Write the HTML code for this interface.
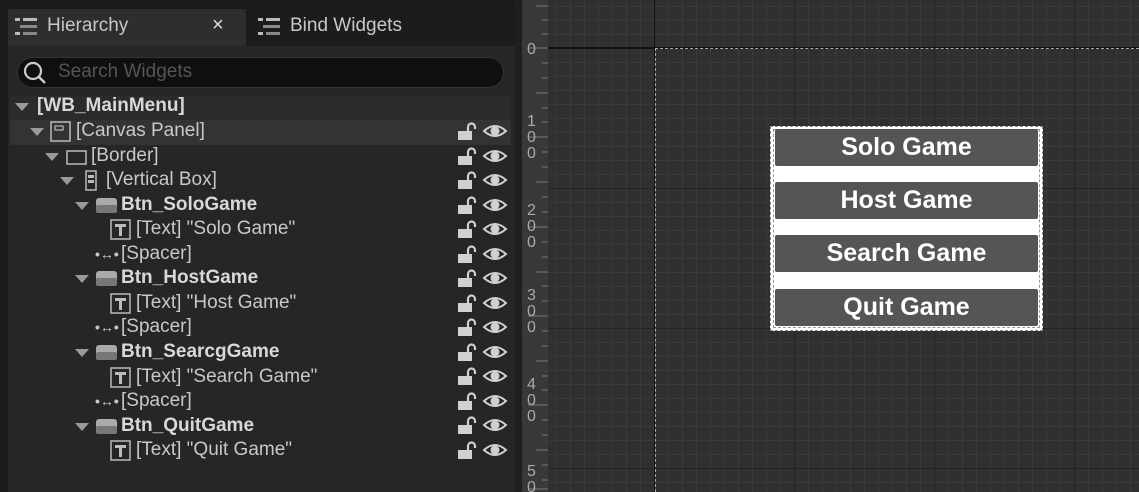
<!DOCTYPE html><html><head><style>
*{margin:0;padding:0;box-sizing:border-box}
html,body{width:1139px;height:492px;overflow:hidden}
body{background:#1a1a1a;font-family:"Liberation Sans",sans-serif;position:relative;color:#c8c8c8}
.a{position:absolute}
.row{position:absolute;left:10px;width:502px;height:24.6px;font-size:19px;line-height:24.6px;white-space:nowrap}
.tri{position:absolute;top:9px;width:0;height:0;border-left:7px solid transparent;border-right:7px solid transparent;border-top:8px solid #9a9a9a}
.t{position:absolute;top:0}
.b{font-weight:bold;color:#d8d8d8}
.ic{position:absolute;top:0}
.btn{position:absolute;left:775px;width:263px;height:37px;background:#555;border-radius:2px;color:#fff;font-weight:bold;font-size:25px;text-align:center;line-height:37px}
</style></head><body>
<div class="a" style="left:8px;top:9px;width:507px;height:483px;background:#262626"></div>
<div class="a" style="left:246px;top:9px;width:269px;height:37px;background:#1c1c1c"></div>
<div class="a" style="left:8px;top:9px;width:238px;height:37px;background:#2e2e2e;border-radius:4px 4px 0 0"></div>
<svg class="a" style="left:15px;top:17px" width="22" height="18"><rect x="0" y="1" width="5" height="3" fill="#bbb"/><rect x="8" y="1" width="14" height="3" fill="#bbb"/><rect x="5" y="8" width="17" height="3" fill="#888"/><rect x="0" y="15" width="5" height="3" fill="#bbb"/><rect x="8" y="15" width="14" height="3" fill="#888"/></svg>
<div class="a" style="left:47px;top:15px;font-size:19px;color:#c8c8c8">Hierarchy</div>
<div class="a" style="left:212px;top:14px;font-size:20px;color:#ddd">×</div>
<svg class="a" style="left:258px;top:17px" width="22" height="18"><rect x="0" y="1" width="5" height="3" fill="#bbb"/><rect x="8" y="1" width="14" height="3" fill="#bbb"/><rect x="5" y="8" width="17" height="3" fill="#888"/><rect x="0" y="15" width="5" height="3" fill="#bbb"/><rect x="8" y="15" width="14" height="3" fill="#888"/></svg>
<div class="a" style="left:290px;top:15px;font-size:19px;color:#c8c8c8">Bind Widgets</div>
<div class="a" style="left:17px;top:57px;width:487px;height:31px;background:#0f0f0f;border:1px solid #333;border-radius:16px"></div>
<svg class="a" style="left:22px;top:60px" width="26" height="26"><circle cx="11" cy="11" r="8" stroke="#ccc" stroke-width="2.2" fill="none"/><line x1="17" y1="17" x2="23" y2="23" stroke="#ccc" stroke-width="2.4"/></svg>
<div class="a" style="left:58px;top:61px;font-size:19px;color:#555">Search Widgets</div>
<div class="a" style="left:10px;top:96px;width:501px;height:24px;background:#2b2b2b"></div>
<div class="a" style="left:10px;top:120px;width:501px;height:25px;background:#333"></div>

<div class="row" style="top:94px"><div class="tri" style="left:5px"></div><span class="t b" style="left:27px">[WB_MainMenu]</span></div>
<div class="row" style="top:119px"><div class="tri" style="left:20px"></div><svg class="ic" style="left:40px;top:2px" width="21" height="21"><rect x="1" y="1" width="19" height="19" fill="none" stroke="#bbb" stroke-width="1.5"/><rect x="5" y="5" width="8" height="4" fill="none" stroke="#bbb" stroke-width="1.2"/></svg><span class="t" style="left:66px">[Canvas Panel]</span></div>
<div class="row" style="top:144px"><div class="tri" style="left:35px"></div><svg class="ic" style="left:56px;top:6px" width="21" height="16"><rect x="1" y="1" width="19" height="13" fill="none" stroke="#bbb" stroke-width="1.5"/></svg><span class="t" style="left:81px">[Border]</span></div>
<div class="row" style="top:168px"><div class="tri" style="left:50px"></div><svg class="ic" style="left:75px;top:2px" width="12" height="22"><rect x="1" y="1" width="10" height="19" fill="none" stroke="#bbb" stroke-width="1.5"/><rect x="3" y="5" width="6" height="3" fill="#bbb"/><rect x="3" y="10" width="6" height="3" fill="#bbb"/></svg><span class="t" style="left:96px">[Vertical Box]</span></div>

<div class="row" style="top:193px"><div class="tri" style="left:65px"></div><svg class="ic" style="left:86px;top:5px" width="22" height="16"><rect x="0" y="0" width="21" height="15" rx="3" fill="#aaa"/><rect x="0" y="7" width="21" height="8" rx="2" fill="#777"/></svg><span class="t b" style="left:111px">Btn_SoloGame</span></div>
<div class="row" style="top:217px"><svg class="ic" style="left:100px;top:2px" width="21" height="21"><rect x="1" y="1" width="19" height="19" fill="none" stroke="#bbb" stroke-width="1.5"/><path d="M5 5h11v3h-4v9h-3v-9h-4z" fill="#bbb"/></svg><span class="t" style="left:126px">[Text] "Solo Game"</span></div>
<div class="row" style="top:242px"><span class="t" style="left:85px;font-size:14px;font-weight:bold">•↔•</span><span class="t" style="left:111px">[Spacer]</span></div>

<div class="row" style="top:266px"><div class="tri" style="left:65px"></div><svg class="ic" style="left:86px;top:5px" width="22" height="16"><rect x="0" y="0" width="21" height="15" rx="3" fill="#aaa"/><rect x="0" y="7" width="21" height="8" rx="2" fill="#777"/></svg><span class="t b" style="left:111px">Btn_HostGame</span></div>
<div class="row" style="top:291px"><svg class="ic" style="left:100px;top:2px" width="21" height="21"><rect x="1" y="1" width="19" height="19" fill="none" stroke="#bbb" stroke-width="1.5"/><path d="M5 5h11v3h-4v9h-3v-9h-4z" fill="#bbb"/></svg><span class="t" style="left:126px">[Text] "Host Game"</span></div>
<div class="row" style="top:315px"><span class="t" style="left:85px;font-size:14px;font-weight:bold">•↔•</span><span class="t" style="left:111px">[Spacer]</span></div>

<div class="row" style="top:340px"><div class="tri" style="left:65px"></div><svg class="ic" style="left:86px;top:5px" width="22" height="16"><rect x="0" y="0" width="21" height="15" rx="3" fill="#aaa"/><rect x="0" y="7" width="21" height="8" rx="2" fill="#777"/></svg><span class="t b" style="left:111px">Btn_SearcgGame</span></div>
<div class="row" style="top:365px"><svg class="ic" style="left:100px;top:2px" width="21" height="21"><rect x="1" y="1" width="19" height="19" fill="none" stroke="#bbb" stroke-width="1.5"/><path d="M5 5h11v3h-4v9h-3v-9h-4z" fill="#bbb"/></svg><span class="t" style="left:126px">[Text] "Search Game"</span></div>
<div class="row" style="top:389px"><span class="t" style="left:85px;font-size:14px;font-weight:bold">•↔•</span><span class="t" style="left:111px">[Spacer]</span></div>

<div class="row" style="top:414px"><div class="tri" style="left:65px"></div><svg class="ic" style="left:86px;top:5px" width="22" height="16"><rect x="0" y="0" width="21" height="15" rx="3" fill="#aaa"/><rect x="0" y="7" width="21" height="8" rx="2" fill="#777"/></svg><span class="t b" style="left:111px">Btn_QuitGame</span></div>
<div class="row" style="top:438px"><svg class="ic" style="left:100px;top:2px" width="21" height="21"><rect x="1" y="1" width="19" height="19" fill="none" stroke="#bbb" stroke-width="1.5"/><path d="M5 5h11v3h-4v9h-3v-9h-4z" fill="#bbb"/></svg><span class="t" style="left:126px">[Text] "Quit Game"</span></div>

<svg class="a" style="left:455px;top:120px" width="55" height="345">
<defs><g id="le"><path d="M3 12h14v9h-14z" fill="#d0d0d0"/><path d="M13 12v-4a3.5 3.5 0 0 1 7 0v2" stroke="#d0d0d0" stroke-width="2.2" fill="none"/><path d="M29 12q11-10 22 0q-11 10-22 0z" fill="none" stroke="#d0d0d0" stroke-width="2"/><circle cx="40" cy="12" r="4.5" fill="#d0d0d0"/></g></defs>
<use href="#le" y="-1"/><use href="#le" y="24"/><use href="#le" y="48"/><use href="#le" y="73"/><use href="#le" y="97"/><use href="#le" y="122"/><use href="#le" y="146"/><use href="#le" y="171"/><use href="#le" y="195"/><use href="#le" y="220"/><use href="#le" y="244"/><use href="#le" y="269"/><use href="#le" y="293"/><use href="#le" y="318"/>
</svg>

<div class="a" style="left:515px;top:0;width:8px;height:492px;background:#1f1f1f"></div>
<div class="a" style="left:522px;top:0;width:26px;height:492px;background:#393939"></div>
<div class="a" style="left:548px;top:0;width:591px;height:492px;background-color:#303030;
background-image:linear-gradient(90deg,#242424 1px,transparent 1px),linear-gradient(#242424 1px,transparent 1px),linear-gradient(90deg,#3a3a3a 1px,transparent 1px),linear-gradient(#3a3a3a 1px,transparent 1px);
background-size:140px 140px,140px 140px,14px 14px,14px 14px;background-position:106px 48px,106px 48px,106px 48px,106px 48px"></div>
<div class="a" style="left:548px;top:47px;width:591px;height:2px;background:#111"></div>
<div class="a" style="left:654px;top:0;width:1px;height:492px;background:#111"></div>
<div class="a" style="left:655px;top:48px;width:484px;height:444px;border-top:1px dashed #aaa;border-left:1px dashed #aaa"></div>
<svg class="a" style="left:522px;top:0" width="26" height="492" font-family="Liberation Sans" font-size="16" fill="#aaa">
<g stroke="#777" stroke-width="1">
<line x1="14" y1="6" x2="26" y2="6"/><line x1="20" y1="20" x2="26" y2="20"/><line x1="20" y1="34" x2="26" y2="34"/><line x1="6" y1="48" x2="26" y2="48"/>
<line x1="20" y1="63" x2="26" y2="63"/><line x1="20" y1="78" x2="26" y2="78"/><line x1="14" y1="93" x2="26" y2="93"/><line x1="20" y1="108" x2="26" y2="108"/><line x1="20" y1="122" x2="26" y2="122"/><line x1="6" y1="137" x2="26" y2="137"/>
<line x1="20" y1="152" x2="26" y2="152"/><line x1="20" y1="167" x2="26" y2="167"/><line x1="14" y1="182" x2="26" y2="182"/><line x1="20" y1="197" x2="26" y2="197"/><line x1="20" y1="212" x2="26" y2="212"/><line x1="6" y1="227" x2="26" y2="227"/>
<line x1="20" y1="242" x2="26" y2="242"/><line x1="20" y1="257" x2="26" y2="257"/><line x1="14" y1="272" x2="26" y2="272"/><line x1="20" y1="286" x2="26" y2="286"/><line x1="20" y1="301" x2="26" y2="301"/><line x1="6" y1="316" x2="26" y2="316"/>
<line x1="20" y1="331" x2="26" y2="331"/><line x1="20" y1="346" x2="26" y2="346"/><line x1="14" y1="361" x2="26" y2="361"/><line x1="20" y1="376" x2="26" y2="376"/><line x1="20" y1="390" x2="26" y2="390"/><line x1="6" y1="405" x2="26" y2="405"/>
<line x1="20" y1="420" x2="26" y2="420"/><line x1="20" y1="435" x2="26" y2="435"/><line x1="14" y1="450" x2="26" y2="450"/><line x1="20" y1="465" x2="26" y2="465"/><line x1="20" y1="480" x2="26" y2="480"/><line x1="6" y1="489" x2="26" y2="489"/>
</g>
<text x="5" y="54">0</text>
<text x="5" y="126">1</text><text x="5" y="142">0</text><text x="5" y="158">0</text>
<text x="5" y="215">2</text><text x="5" y="231">0</text><text x="5" y="247">0</text>
<text x="5" y="300">3</text><text x="5" y="316">0</text><text x="5" y="332">0</text>
<text x="5" y="389">4</text><text x="5" y="405">0</text><text x="5" y="421">0</text>
<text x="5" y="476">5</text><text x="5" y="492">0</text>
</svg>

<div class="a" style="left:770px;top:126px;width:273px;height:205px;background:#fff;border:1px dashed #888"></div>
<div class="a" style="left:773px;top:129px;width:267px;height:199px;border:1px dashed #999"></div>
<div class="btn" style="top:129px">Solo Game</div>
<div class="btn" style="top:182px">Host Game</div>
<div class="btn" style="top:235px">Search Game</div>
<div class="btn" style="top:289px">Quit Game</div>
</body></html>
